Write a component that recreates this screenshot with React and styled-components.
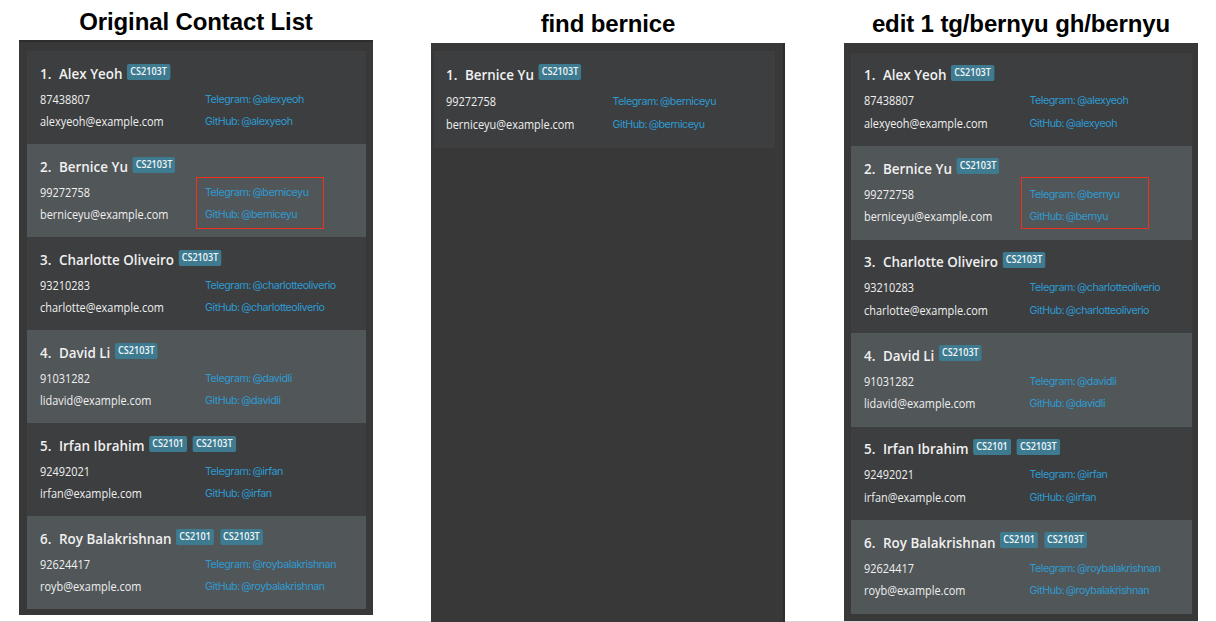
import React from "react";
import styled, { createGlobalStyle } from "styled-components";

const GlobalStyle = createGlobalStyle`
  * { box-sizing: border-box; }
  body { margin: 0; background: #fff; overflow: hidden; }
`;

const Page = styled.main`
  display: grid;
  grid-template-columns: 354px 354px 354px;
  column-gap: 58px;
  padding-left: 19px;
  width: 1216px;
  height: 622px;
  background: linear-gradient(#d6d6d6, #d6d6d6) left bottom / 100% 1px no-repeat #fff;
`;

const Column = styled.section`
  display: flex;
  flex-direction: column;
  margin-left: ${(p) => p.$shift || 0}px;
  width: 354px;
`;

const Title = styled.h1`
  margin: 0;
  height: ${(p) => p.$height}px;
  padding-top: ${(p) => p.$top}px;
  font: bold 24px/28px "Liberation Sans", Arial, sans-serif;
  letter-spacing: -0.12px;
  text-align: center;
  white-space: nowrap;
  color: #000;
`;

const Panel = styled.div`
  height: ${(p) => p.$height}px;
  padding: ${(p) => p.$padding};
  background: #383838;
  border-style: solid;
  border-color: #2d2d2e;
  border-width: ${(p) => p.$edge || "0"};
`;

const Card = styled.article`
  height: ${(p) => p.$metrics.card}px;
  padding: ${(p) => p.$metrics.top}px 0 0 ${(p) => p.$metrics.left}px;
  background: ${(p) => (p.$alternate ? "#515658" : "#3c3e3f")};
`;

const Header = styled.header`
  display: flex;
  align-items: flex-start;
  height: ${(p) => p.$metrics.header}px;
  transform: scaleX(0.925);
  transform-origin: left top;
`;

const Name = styled.h2`
  display: flex;
  margin: ${(p) => p.$metrics.nameShift}px 0 0;
  font: 600 14.5px/22px "Open Sans", sans-serif;
  color: #f0f0f0;
  white-space: nowrap;
`;

const Index = styled.span`
  width: 20.5px;
`;

const Tags = styled.div`
  display: flex;
  gap: 6.5px;
  margin-left: 5px;
`;

const Tag = styled.span`
  height: 16px;
  padding: 0 3.4px;
  border-radius: 2px;
  background: #3e7b91;
  color: #f2f6f7;
  font: 600 9.8px/15px "Open Sans", sans-serif;
`;

const Details = styled.div`
  display: grid;
  grid-template-columns: ${(p) => p.$metrics.split}px 1fr;
  grid-auto-rows: ${(p) => p.$metrics.line}px;
`;

const Detail = styled.span`
  font: 400 12px/20px "Open Sans", sans-serif;
  transform: scaleX(0.91);
  transform-origin: left top;
  color: #f0f0f0;
  white-space: nowrap;
`;

const Links = styled.div`
  position: relative;
  grid-column: 2;
  grid-row: 1 / span 2;
  display: grid;
  grid-auto-rows: ${(p) => p.$metrics.line}px;
`;

const Handle = styled.a`
  font: 400 10.7px/20px Inter, sans-serif;
  letter-spacing: -0.46px;
  word-spacing: -1.1px;
  color: #2e9bd3;
  white-space: nowrap;
`;

const Highlight = styled.div`
  position: absolute;
  left: -9px;
  top: ${(p) => p.$top}px;
  width: 128px;
  height: 52px;
  border: 1px solid #f0301c;
`;

const contacts = [
  { name: "Alex Yeoh", phone: "87438807", email: "alexyeoh@example.com", handle: "@alexyeoh", tags: ["CS2103T"] },
  { name: "Bernice Yu", phone: "99272758", email: "berniceyu@example.com", handle: "@berniceyu", tags: ["CS2103T"] },
  { name: "Charlotte Oliveiro", phone: "93210283", email: "charlotte@example.com", handle: "@charlotteoliverio", tags: ["CS2103T"] },
  { name: "David Li", phone: "91031282", email: "lidavid@example.com", handle: "@davidli", tags: ["CS2103T"] },
  { name: "Irfan Ibrahim", phone: "92492021", email: "irfan@example.com", handle: "@irfan", tags: ["CS2101", "CS2103T"] },
  { name: "Roy Balakrishnan", phone: "92624417", email: "royb@example.com", handle: "@roybalakrishnan", tags: ["CS2101", "CS2103T"] },
];
const edited = contacts.map((c) => (c.name === "Bernice Yu" ? { ...c, handle: "@bernyu" } : c));

const originalMetrics = { card: 92.9, top: 13, left: 13, header: 26, split: 165, line: 22, mark: -6, nameShift: -1 };
const foundMetrics = { card: 97, top: 13, left: 12.5, header: 28, split: 166.5, line: 23, mark: 0, nameShift: 0 };
const editedMetrics = { card: 93.5, top: 12, left: 12.5, header: 26.4, split: 166, line: 22.5, mark: -8, nameShift: -0.5 };

function ContactCard({ contact, index, metrics, highlighted }) {
  return (
    <Card $metrics={metrics} $alternate={index % 2 === 0}>
      <Header $metrics={metrics}>
        <Name $metrics={metrics}><Index>{index}.</Index>{contact.name}</Name>
        <Tags>{contact.tags.map((t) => <Tag key={t}>{t}</Tag>)}</Tags>
      </Header>
      <Details $metrics={metrics}>
        <Detail>{contact.phone}</Detail>
        <Detail>{contact.email}</Detail>
        <Links $metrics={metrics}>
          <Handle>Telegram: {contact.handle}</Handle>
          <Handle>GitHub: {contact.handle}</Handle>
          {highlighted && <Highlight $top={metrics.mark} />}
        </Links>
      </Details>
    </Card>
  );
}

function ContactList({ people, metrics, mark }) {
  return people.map((c, i) => (
    <ContactCard key={c.name} contact={c} index={i + 1} metrics={metrics} highlighted={mark === c.name} />
  ));
}

export default function App() {
  return (
    <>
      <GlobalStyle />
      <Page>
        <Column>
          <Title $height={40} $top={8}>Original Contact List</Title>
          <Panel $height={575} $padding="9.3px 7px 0 8px" $edge="2px 0 0 0">
            <ContactList people={contacts} metrics={originalMetrics} mark="Bernice Yu" />
          </Panel>
        </Column>
        <Column>
          <Title $height={43} $top={10}>find bernice</Title>
          <Panel $height={579} $padding="8px 8px 0 2.5px" $edge="0 2px 0 0">
            <ContactList people={[contacts[1]]} metrics={foundMetrics} />
          </Panel>
        </Column>
        <Column $shift={1}>
          <Title $height={43} $top={10}>edit 1 tg/bernyu gh/bernyu</Title>
          <Panel $height={578} $padding="9.8px 6px 0 7px">
            <ContactList people={edited} metrics={editedMetrics} mark="Bernice Yu" />
          </Panel>
        </Column>
      </Page>
    </>
  );
}
